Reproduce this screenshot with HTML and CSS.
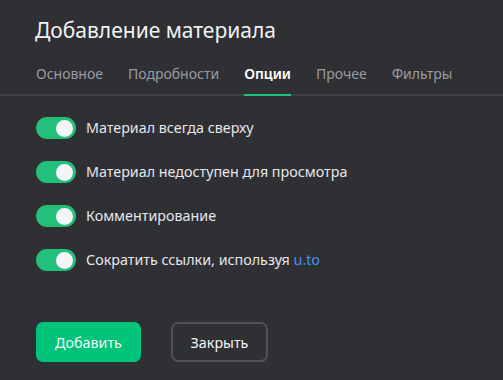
FILE: index.html
```html
<!DOCTYPE html>
<html>
<head>
    <title>Добавление материала</title>
    <link rel="stylesheet" href="styles.css">
</head>
<body>
    <div class="dialog">
        <h1 class="dialog-title">Добавление материала</h1>

        <div class="tabs">
            <div class="tab">Основное</div>
            <div class="tab">Подробности</div>
            <div class="tab active">Опции</div>
            <div class="tab">Прочее</div>
            <div class="tab">Фильтры</div>
        </div>

        <div class="options">
            <label class="option">
                <span class="switch on"><span class="knob"></span></span>
                <span class="option-text">Материал всегда сверху</span>
            </label>
            <label class="option">
                <span class="switch on"><span class="knob"></span></span>
                <span class="option-text">Материал недоступен для просмотра</span>
            </label>
            <label class="option">
                <span class="switch on"><span class="knob"></span></span>
                <span class="option-text">Комментирование</span>
            </label>
            <label class="option">
                <span class="switch on"><span class="knob"></span></span>
                <span class="option-text">Сократить ссылки, используя <a class="link" href="#">u.to</a></span>
            </label>
        </div>

        <div class="actions">
            <button class="btn primary">Добавить</button>
            <button class="btn outline">Закрыть</button>
        </div>
    </div>
</body>
</html>
```

FILE: styles.css
```css
* {
    margin: 0;
    padding: 0;
    box-sizing: border-box;
}

body {
    background-color: #2f3034;
    color: #e8e8ec;
    font-family: 'Noto Sans', 'Open Sans', sans-serif;
    width: 503px;
    height: 380px;
    overflow: hidden;
}

.dialog {
    padding-top: 16px;
}

.dialog-title {
    font-size: 21px;
    font-weight: 400;
    line-height: 28px;
    color: #f2f2f4;
    padding: 0 35px;
}

.tabs {
    display: flex;
    gap: 25px;
    padding: 0 36px;
    margin-top: 20px;
    border-bottom: 2px solid #3e3f44;
}

.tab {
    font-size: 14px;
    line-height: 20px;
    color: #9a9ba0;
    padding-bottom: 10px;
    margin-bottom: -2px;
    border-bottom: 2px solid transparent;
}

.tab.active {
    color: #ffffff;
    font-weight: 600;
    border-bottom-color: #1fc27e;
}

.options {
    display: flex;
    flex-direction: column;
    gap: 22px;
    padding: 21px 36px 0;
}

.option {
    display: flex;
    align-items: center;
    gap: 10px;
    cursor: pointer;
}

.switch {
    width: 40px;
    height: 22px;
    border-radius: 11px;
    background: #22c07a;
    display: flex;
    align-items: center;
    justify-content: flex-end;
    padding: 0 3px;
}

.knob {
    width: 17px;
    height: 17px;
    border-radius: 50%;
    background: #f5f5f9;
}

.option-text {
    font-size: 14.3px;
    line-height: 20px;
    color: #e6e6ea;
}

.link {
    color: #4a8ef0;
    text-decoration: none;
}

.actions {
    display: flex;
    gap: 30px;
    padding: 51px 36px 0;
}

.btn {
    height: 40px;
    border-radius: 7px;
    font-family: 'Noto Sans', 'Open Sans', sans-serif;
    font-size: 14.3px;
    color: #f4f4f6;
    cursor: pointer;
}

.btn.primary {
    width: 105px;
    background: #00c47a;
    border: none;
}

.btn.outline {
    width: 97px;
    background: transparent;
    border: 2px solid #505156;
}
```
